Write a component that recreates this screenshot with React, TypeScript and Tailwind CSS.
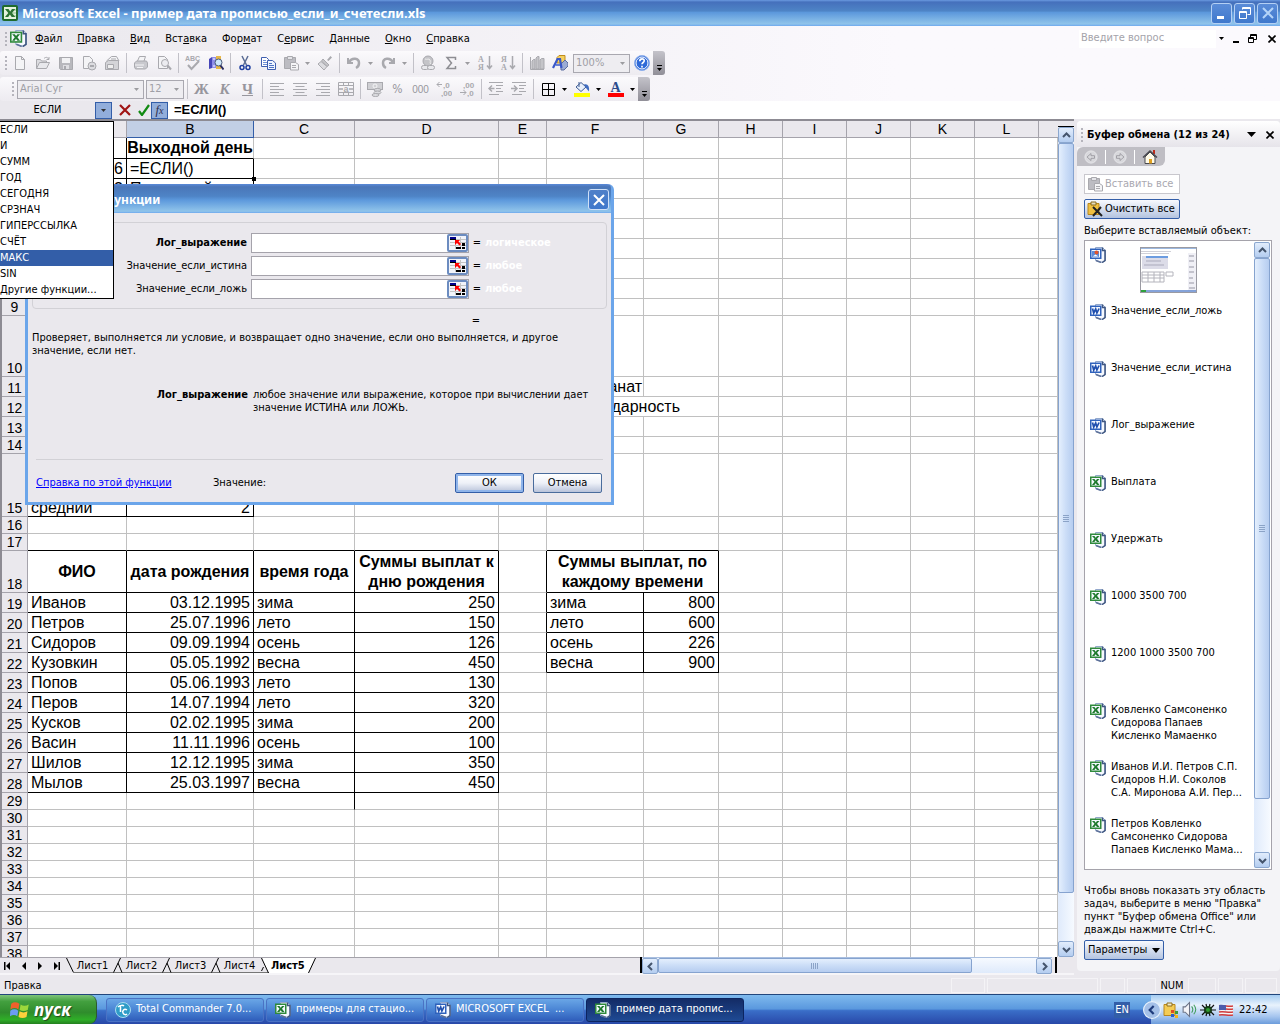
import type { ReactNode } from 'react';

type Align = 'l' | 'r' | 'c';

interface Cell {
  text?: string;
  align?: Align;
  bold?: boolean;
  span?: number;
  right?: boolean;
  bottom?: boolean;
  extra?: string;
}

interface RowDef {
  n: number;
  h: string;
  cells?: Record<string, Cell>;
}

const COLUMNS = ['A', 'B', 'C', 'D', 'E', 'F', 'G', 'H', 'I', 'J', 'K', 'L', 'M'];

const FUNCTIONS = ['ЕСЛИ', 'И', 'СУММ', 'ГОД', 'СЕГОДНЯ', 'СРЗНАЧ', 'ГИПЕРССЫЛКА', 'СЧЁТ', 'МАКС', 'SIN', 'Другие функции...'];

const MENU = [
  ['', 'Ф', 'айл'],
  ['', 'П', 'равка'],
  ['', 'В', 'ид'],
  ['Вст', 'а', 'вка'],
  ['Фор', 'м', 'ат'],
  ['С', 'е', 'рвис'],
  ['', 'Д', 'анные'],
  ['', 'О', 'кно'],
  ['', 'С', 'правка'],
];

const PEOPLE = [
  ['Иванов', '03.12.1995', 'зима', '250'],
  ['Петров', '25.07.1996', 'лето', '150'],
  ['Сидоров', '09.09.1994', 'осень', '126'],
  ['Кузовкин', '05.05.1992', 'весна', '450'],
  ['Попов', '05.06.1993', 'лето', '130'],
  ['Перов', '14.07.1994', 'лето', '320'],
  ['Кусков', '02.02.1995', 'зима', '200'],
  ['Васин', '11.11.1996', 'осень', '100'],
  ['Шилов', '12.12.1995', 'зима', '350'],
  ['Мылов', '25.03.1997', 'весна', '450'],
];

const SEASONS = [
  ['зима', '800'],
  ['лето', '600'],
  ['осень', '226'],
  ['весна', '900'],
];

const box = { right: true, bottom: true };

// the cell being edited carries the fill handle in its corner
const active = 'px-[3px] relative after:absolute after:-bottom-[3px] after:-right-[3px] after:size-1 after:bg-black';

const ROWS: RowDef[] = [
  { n: 1, h: 'h-[21px]', cells: { A: { right: true, bottom: true }, B: { text: 'Выходной день', bold: true, align: 'c', bottom: true } } },
  { n: 2, h: 'h-5', cells: { A: { text: '6', align: 'r', ...box }, B: { text: '=ЕСЛИ()', extra: active, ...box } } },
  { n: 3, h: 'h-5', cells: { A: { text: '3', align: 'r', ...box }, B: { text: 'Последний', ...box } } },
  ...[4, 5, 6, 7, 8].map(n => ({ n, h: 'h-5' })),
  { n: 9, h: 'h-[17px]' },
  { n: 10, h: 'h-[61px]' },
  { n: 11, h: 'h-5', cells: { F: { text: 'гранат', align: 'r', extra: 'pr-px' } } },
  { n: 12, h: 'h-5', cells: { F: { text: 'солидарность', align: 'r', span: 2, extra: 'pr-[38px]' } } },
  { n: 13, h: 'h-5' },
  { n: 14, h: 'h-[17px]' },
  { n: 15, h: 'h-[63px]', cells: { A: { text: 'средний', ...box }, B: { text: '2', align: 'r', ...box } } },
  { n: 16, h: 'h-[17px]' },
  {
    n: 17,
    h: 'h-[17px]',
    cells: { A: { bottom: true }, B: { bottom: true }, C: { bottom: true }, D: { bottom: true }, F: { bottom: true }, G: { bottom: true } },
  },
  {
    n: 18,
    h: 'h-[42px]',
    cells: {
      A: { text: 'ФИО', align: 'c', bold: true, ...box },
      B: { text: 'дата рождения', align: 'c', bold: true, ...box },
      C: { text: 'время года', align: 'c', bold: true, ...box },
      D: { text: 'Суммы выплат к\nдню рождения', align: 'c', bold: true, ...box },
      E: { right: true },
      F: { text: 'Суммы выплат, по\nкаждому времени', align: 'c', bold: true, span: 2, ...box },
    },
  },
  ...PEOPLE.map((p, i) => {
    const cells: Record<string, Cell> = {
      A: { text: p[0], ...box },
      B: { text: p[1], align: 'r', ...box },
      C: { text: p[2], ...box },
      D: { text: p[3], align: 'r', ...box },
    };
    if (SEASONS[i]) {
      cells.E = { right: true };
      cells.F = { text: SEASONS[i][0], ...box };
      cells.G = { text: SEASONS[i][1], align: 'r', ...box };
    }
    return { n: 19 + i, h: 'h-5', cells };
  }),
  { n: 29, h: 'h-[17px]', cells: { C: { right: true } } },
  ...[30, 31, 32, 33, 34, 35, 36, 37, 38].map(n => ({ n, h: 'h-[17px]' })),
];

const CLIPS: { kind: 'ppt' | 'word' | 'excel'; lines: string[] }[] = [
  { kind: 'ppt', lines: [] },
  { kind: 'word', lines: ['Значение_если_ложь'] },
  { kind: 'word', lines: ['Значение_если_истина'] },
  { kind: 'word', lines: ['Лог_выражение'] },
  { kind: 'excel', lines: ['Выплата'] },
  { kind: 'excel', lines: ['Удержать'] },
  { kind: 'excel', lines: ['1000 3500 700'] },
  { kind: 'excel', lines: ['1200 1000 3500 700'] },
  { kind: 'excel', lines: ['Ковленко Самсоненко', 'Сидорова Папаев', 'Кисленко Мамаенко'] },
  { kind: 'excel', lines: ['Иванов И.И. Петров С.П.', 'Сидоров Н.И. Соколов', 'С.А. Миронова А.И. Пер...'] },
  { kind: 'excel', lines: ['Петров Ковленко', 'Самсоненко Сидорова', 'Папаев Кисленко Мама...'] },
];

/* ---------- icons ---------- */

function Svg({ children, size = 16 }: { children: ReactNode; size?: number }) {
  return (
    <svg viewBox="0 0 16 16" width={size} height={size} fill="none" className="shrink-0" aria-hidden="true">
      {children}
    </svg>
  );
}

function ExcelIcon() {
  return (
    <svg viewBox="0 0 16 16" width="16" height="16" fill="none" className="shrink-0" aria-hidden="true">
      <rect x="1" y="1" width="14" height="14" rx="1" fill="#e4f2de" stroke="#1f6b2c" strokeWidth="2" />
      <path d="M10 5h4M10 8h4M10 11h4" stroke="#8fc48c" />
      <path d="M3 4h3.500l1.700 2.500L10 4h3.300L10 8l3.300 4H9.700L7.900 9.600 6.200 12H3l3.300-4z" fill="#2c7434" />
    </svg>
  );
}

function DocIcon({ kind, size = 16 }: { kind: 'ppt' | 'word' | 'excel'; size?: number }) {
  const edge = kind === 'excel' ? '#2f8a3c' : '#2f62bc';
  return (
    <Svg size={size}>
      <path d="M5.500.500h7l3 3v10l-3 2-7-2z" fill="#f6f9ff" stroke="#93a8cc" />
      <path d="M12.500.500v3h2.500v10l-3 2" stroke="#3f5680" strokeWidth="1.500" />
      <path d="M6 13.500l5 2" stroke="#5c7098" strokeWidth="1.500" />
      <rect x=".75" y="2.250" width="10" height="9" fill="#f4f8ff" stroke={edge} strokeWidth="1.500" />
      {kind === 'excel' && <path d="M2 4h2.500l1.200 1.700L7 4h2.500L7 6.800 9.500 10H7L5.600 8.300 4.400 10H2l2.500-3.200z" fill="#1f7a2e" />}
      {kind === 'word' && <path d="M2.500 4.500l1.200 4.500 2-4 1.200 4 2.200-4.500" stroke="#1f4fae" strokeWidth="1.700" />}
      {kind === 'ppt' && (
        <>
          <rect x="2" y="4" width="7" height="6" fill="#5a8ad8" />
          <circle cx="6.500" cy="5.500" r="2" fill="#e0542c" />
          <path d="M2.500 9.500l3-2 3 2z" fill="#fff" />
        </>
      )}
    </Svg>
  );
}

function Caret({ color = '#9c9ca0' }: { color?: string }) {
  return (
    <svg viewBox="0 0 5 3" width="5" height="3" className="shrink-0" aria-hidden="true">
      <path d="M0 0h5L2.500 3z" fill={color} />
    </svg>
  );
}

const G = '#a9a9ae';
const L = '#dcdce0';

const icons = {
  fresh: <Svg><path d="M3.500 1.500h6l3 3v10h-9z" fill="#f4f4f6" stroke={G} /><path d="M9.500 1.500v3h3" stroke={G} /></Svg>,
  open: <Svg><path d="M1.500 13.500v-9h4l1 1.500h5v2" fill={L} stroke={G} /><path d="M1.500 13.500l3-6h10l-3 6z" fill="#e8e8ec" stroke={G} /><path d="M9 3.500c2-2 4-1 4.500.500M14 2v2.500h-2.500" stroke={G} /></Svg>,
  save: <Svg><path d="M1.500 2.500h13v12h-12l-1-1z" fill="#b8b8bd" stroke={G} /><path d="M4 3h8v5H4z" fill="#f2f2f4" /><path d="M5 10h6v4H5z" fill="#dedee2" /><path d="M6 11h2v3H6z" fill={G} /></Svg>,
  perm: <Svg><path d="M2.500 1.500h6l3 3v9h-9z" fill="#f4f4f6" stroke={G} /><circle cx="11" cy="11" r="4" fill={L} stroke={G} /><path d="M9 11h4" stroke={G} strokeWidth="2" /></Svg>,
  mail: <Svg><path d="M2.500 6l5-4.500h5L15 6" fill="#f4f4f6" stroke={G} /><path d="M7 4h5" stroke={G} /><path d="M1.500 7.500l3-2h10v9h-13z" fill="#d4d4d8" stroke={G} /><path d="M3.500 13.500v-4h6v4z" fill="#eee" stroke={G} /></Svg>,
  print: <Svg><path d="M4.500 6l2-4.500h6L11 6" fill="#f4f4f6" stroke={G} /><path d="M1.500 8l2-2h10l1 2v4l-2 2h-10l-1-2z" fill="#c9c9ce" stroke={G} /><path d="M2 10h9M4 12.500h6" stroke="#f4f4f6" /></Svg>,
  preview: <Svg><path d="M2.500 1.500h6l3 3v9h-9z" fill="#f4f4f6" stroke={G} /><circle cx="9" cy="8" r="3.500" fill="#ececf0" stroke={G} /><path d="M11.500 10.500l3.500 4" stroke={G} strokeWidth="2" /></Svg>,
  spell: <Svg><text x="0" y="6" fontSize="7" fontFamily="Liberation Sans" fontWeight="700" fill={G}>ABC</text><path d="M3 10l3.500 4L14 6" stroke={G} strokeWidth="2" /></Svg>,
  research: <Svg><path d="M1 4l3-2v11l-3 1z" fill="#4646b8" /><path d="M4 2h4v11H4z" fill="#8f8fe8" /><path d="M5 4h2M5 11h2" stroke="#fff" /><path d="M8 1h5v13H8z" fill="#e8b848" /><circle cx="10.500" cy="7.500" r="3.500" fill="#cfe8fc" stroke="#4a5c78" /><path d="M12.500 10.500l3 4" stroke="#2c2c60" strokeWidth="2" /></Svg>,
  cut: <Svg><path d="M5 1l4.500 9M11 1L6.500 10" stroke="#5a6c94" strokeWidth="1.500" /><circle cx="5" cy="12.500" r="2" stroke="#1f3fa0" strokeWidth="1.500" /><circle cx="11" cy="12.500" r="2" stroke="#1f3fa0" strokeWidth="1.500" /></Svg>,
  copy: <Svg><path d="M1.500 2.500h5l2 2v7h-7z" fill="#fff" stroke="#3f5fb0" /><path d="M3 5.500h3M3 7.500h4M3 9.500h4" stroke="#6f8fd4" /><path d="M7.500 5.500h5l3 2.500v6.500h-8z" fill="#eef4ff" stroke="#3f5fb0" /><path d="M9 8.500h3M9 10.500h5M9 12.500h5" stroke="#4f74c4" /></Svg>,
  paste: <Svg><path d="M1.500 2.500h11v11h-11z" fill="#bcbcc2" stroke={G} /><path d="M4.500 1.500h5v3h-5z" fill="#e4e4e8" stroke={G} /><path d="M7.500 7.500h5l3 2v5.500h-8z" fill="#f4f4f6" stroke={G} /><path d="M9 10.500h4M9 12.500h4" stroke={G} /></Svg>,
  painter: <Svg><path d="M10 5l3.500-4 1.500 1.500L11.500 6z" fill={G} /><path d="M6 4l6 6-2 1.500L4.500 6z" fill="#c4c4c8" stroke={G} /><path d="M4 6.500L1 9l6 6 3-3.500z" fill={L} stroke={G} /></Svg>,
  undo: <Svg><path d="M2 3v5h5" stroke={G} strokeWidth="2" /><path d="M3 7c3-5 10-4 10 1 0 2-1 4-3 5" stroke={G} strokeWidth="2.500" /></Svg>,
  redo: <Svg><path d="M14 3v5H9" stroke={G} strokeWidth="2" /><path d="M13 7C10 2 3 3 3 8c0 2 1 4 3 5" stroke={G} strokeWidth="2.500" /></Svg>,
  link: <Svg><circle cx="8" cy="6" r="5" fill="#c4c4c8" stroke={G} /><path d="M5 4c2 1 4-1 5 1s-1 3 1 4" stroke="#eee" /><rect x="1.500" y="10.500" width="7" height="4" rx="2" fill="#e8e8ec" stroke={G} /><rect x="7.500" y="10.500" width="7" height="4" rx="2" fill="#e8e8ec" stroke={G} /></Svg>,
  sum: <Svg><path d="M12.500 5V2.500H4L8.500 8 4 13.500h8.500V11" stroke="#8e8e93" strokeWidth="1.500" /></Svg>,
  sortA: <Svg><text x="1" y="7" fontSize="8" fontFamily="Liberation Serif" fontWeight="700" fill={G}>А</text><text x="1" y="15" fontSize="8" fontFamily="Liberation Serif" fontWeight="700" fill={G}>Я</text><path d="M12.500 1v12M10 10.500l2.500 3 2.500-3" stroke={G} strokeWidth="1.500" /></Svg>,
  sortZ: <Svg><text x="1" y="7" fontSize="8" fontFamily="Liberation Serif" fontWeight="700" fill={G}>Я</text><text x="1" y="15" fontSize="8" fontFamily="Liberation Serif" fontWeight="700" fill={G}>А</text><path d="M12.500 1v12M10 10.500l2.500 3 2.500-3" stroke={G} strokeWidth="1.500" /></Svg>,
  chart: <Svg><path d="M1.500 2v12.500H15" stroke={G} /><path d="M3 6l1.500-1.500H6V14H3zM7 3l1.500-1.500H10V14H7zM11 5l1.500-1.500H15V14h-4z" fill="#c4c4c8" stroke={G} /></Svg>,
  drawing: <Svg><path d="M5 2.500l2-2h6v6L11 8H5z" fill="#f4d060" stroke="#c08c1c" /><path d="M9 9l4-4 3 3v3l-4 4H9z" fill="#9cacd4" stroke="#5a6ca0" /><path d="M1 13L5.500 4H8l1.500 9" stroke="#3a58c8" strokeWidth="2.200" /><path d="M3.500 10h5" stroke="#3a58c8" strokeWidth="1.500" /></Svg>,
  help: <Svg><circle cx="8" cy="8" r="7.500" fill="#2f6ad8" stroke="#8fb0ec" /><circle cx="8" cy="8" r="6" stroke="#fff" /><path d="M5.800 6.300c0-3.300 4.700-3 4.400-.300-.200 1.500-2.200 1.500-2.200 3.200M8 10.800v1.600" stroke="#fff" strokeWidth="1.700" /></Svg>,
  left: <Svg><path d="M1 2.500h14M1 5.500h9M1 8.500h14M1 11.500h9M1 14.500h14" stroke={G} /></Svg>,
  center: <Svg><path d="M1 2.500h14M3.500 5.500h9M1 8.500h14M3.500 11.500h9M1 14.500h14" stroke={G} /></Svg>,
  right: <Svg><path d="M1 2.500h14M6 5.500h9M1 8.500h14M6 11.500h9M1 14.500h14" stroke={G} /></Svg>,
  merge: <Svg><path d="M.5 1.500h15v13H.5zM.5 4.500h15M.5 11.500h15M5.500 1.500v3M10.500 1.500v3M5.500 11.500v3M10.500 11.500v3" stroke={G} /><path d="M1 8h4M11 8h4" stroke={G} strokeWidth="1.500" /><text x="5.500" y="10.500" fontSize="9" fontWeight="700" fontFamily="Liberation Sans" fill={G}>a</text></Svg>,
  money: <Svg><rect x=".5" y="1.500" width="15" height="7" fill="#d0d0d4" stroke={G} /><circle cx="8" cy="5" r="2" stroke="#f4f4f6" /><ellipse cx="10.500" cy="9" rx="3.500" ry="1.500" fill={L} stroke={G} /><ellipse cx="10.500" cy="11.500" rx="3.500" ry="1.500" fill={L} stroke={G} /><ellipse cx="8.500" cy="14" rx="3.500" ry="1.500" fill={L} stroke={G} /></Svg>,
  inc: <Svg><path d="M6 3.500H1M3.500 1L1 3.500 3.500 6" stroke={G} /><text x="7" y="7" fontSize="8" fontFamily="Liberation Sans" fontWeight="700" fill={G}>,0</text><text x="5" y="15" fontSize="8" fontFamily="Liberation Sans" fontWeight="700" fill={G}>,00</text></Svg>,
  dec: <Svg><path d="M1 11.500h6M4.500 9L7 11.500 4.500 14" stroke={G} /><text x="4" y="7" fontSize="8" fontFamily="Liberation Sans" fontWeight="700" fill={G}>,00</text><text x="8" y="15" fontSize="8" fontFamily="Liberation Sans" fontWeight="700" fill={G}>,0</text></Svg>,
  outdent: <Svg><path d="M1 1.500h14M8 4.500h7M8 7.500h5M8 10.500h7M1 13.500h10" stroke={G} /><path d="M6.500 7.500H1M4 4.500l-3 3 3 3" stroke={G} strokeWidth="1.500" /></Svg>,
  indent: <Svg><path d="M1 1.500h14M8 4.500h7M8 7.500h5M8 10.500h7M1 13.500h10" stroke={G} /><path d="M0 7.500h5.500M3 4.500l3 3-3 3" stroke={G} strokeWidth="1.500" /></Svg>,
  borders: <Svg><path d="M2.500 2.500h12v12h-12zM8.500 2.500v12M2.500 8.500h12" stroke="#000" /></Svg>,
  fill: <Svg><path d="M2 6l5-4.500L12 6 7 10.500z" fill="#e8f0fc" stroke="#3f5c94" /><path d="M5 1v5" stroke="#3f5c94" /><path d="M10 3.500c4-1 5.500 2 5 7L12 7z" fill="#3f6cc0" /><path d="M0 12h16v4H0z" fill="#ff0" /></Svg>,
  font: <Svg><text x="2.500" y="11" fontSize="14" fontFamily="Liberation Serif" fontWeight="700" fill="#2c4c8c">A</text><path d="M0 12h16v4H0z" fill="#f00" /></Svg>,
};

/* ---------- toolbars ---------- */

function Tool({ label, children, small }: { label: string; children: ReactNode; small?: boolean }) {
  return (
    <button type="button" aria-label={label} className={`flex h-[22px] shrink-0 items-center justify-center ${small ? 'w-[11px]' : 'w-[23px]'}`}>
      {children}
    </button>
  );
}

function Sep() {
  return (
    <span className="flex h-5 w-[6px] shrink-0 justify-center">
      <span className="w-px bg-[#c2c1c8]" />
    </span>
  );
}

function Grip() {
  return (
    <span className="flex w-[3px] shrink-0 flex-col gap-[2px]">
      {[0, 1, 2, 3].map(i => (
        <span key={i} className="size-[2px] bg-[#b5b4bc]" />
      ))}
    </span>
  );
}

function BarEnd() {
  return (
    <button type="button" aria-label="Параметры панели инструментов" className="flex h-6 w-3 shrink-0 flex-col items-center justify-end gap-[2px] rounded-r-[3px] bg-gradient-to-b from-[#c4c3ca] to-[#918f98] pb-1">
      <span className="h-px w-[5px] bg-black" />
      <Caret color="#000" />
    </button>
  );
}

function BoxSelect({ label, value, width }: { label: string; value: string; width: string }) {
  return (
    <label className={`flex h-[19px] shrink-0 items-center border border-[#a9a8b0] bg-[#eeedf1] pr-1 ${width}`}>
      <select aria-label={label} disabled className="h-[17px] min-w-0 flex-1 appearance-none bg-transparent pl-[2px] text-[11px] leading-4 text-[#9f9fa6] opacity-100">
        <option>{value}</option>
      </select>
      <Caret />
    </label>
  );
}

function TitleBar() {
  const btn = 'flex size-[21px] items-center justify-center rounded-[3px] border border-[#b4d0f4] bg-gradient-to-b from-[#5a8cd8] to-[#3f78cc]';
  return (
    <header className="flex h-[26px] shrink-0 items-center bg-[linear-gradient(#6a9ae0_0,#4570bc_8%,#4e84c6_42%,#5c98dc_48%,#90c4ea_92%,#6ea8ee_100%)] pl-[2px] pr-[2px]">
      <ExcelIcon />
      <h1 className="min-w-0 flex-1 truncate pl-1 font-['Noto_Sans'] text-[13px] font-bold leading-5 text-white">
        Microsoft Excel - пример дата прописью_если_и_счетесли.xls
      </h1>
      <div className="flex gap-[2px]">
        <button type="button" aria-label="Свернуть" className={btn}>
          <Svg><path d="M3 11h7v3H3z" fill="#fff" /></Svg>
        </button>
        <button type="button" aria-label="Восстановить" className={btn}>
          <Svg><path d="M5.500 4.500v-2h8v7h-3M5.500 3.500h8M2.500 6.500h7v7h-7zM2.500 7.500h7" stroke="#fff" /></Svg>
        </button>
        <button type="button" aria-label="Закрыть" className={btn}>
          <Svg><path d="M3 3l10 10M13 3L3 13" stroke="#b4d4f8" strokeWidth="2" /></Svg>
        </button>
      </div>
    </header>
  );
}

function MenuBar() {
  return (
    <nav className="flex h-[25px] shrink-0 items-center pl-[5px]">
      <Grip />
      <span className="ml-[2px] mr-1">
        <DocIcon kind="excel" size={17} />
      </span>
      {MENU.map(([a, b, c]) => (
        <button key={a + b + c} type="button" className="mr-[7px] px-1 leading-4">
          {a}
          <u>{b}</u>
          {c}
        </button>
      ))}
      <div className="ml-auto flex h-[18px] items-center bg-white">
        <input aria-label="Введите вопрос" placeholder="Введите вопрос" className="w-[137px] bg-transparent pl-[2px] text-[11px] outline-none placeholder:text-[#a4a3aa]" />
        <button type="button" aria-label="Список вопросов" className="flex h-[18px] w-[11px] items-center justify-center bg-[#fbf9fd]">
          <Caret color="#000" />
        </button>
      </div>
      <div className="flex pl-1">
        <Tool label="Свернуть окно" small><svg width="7" height="9" aria-hidden="true"><path d="M0 7h6v2H0z" /></svg></Tool>
        <button type="button" aria-label="Восстановить окно" className="flex h-[22px] w-[21px] items-center justify-center">
          <svg viewBox="0 0 9 9" width="9" height="9" fill="none" stroke="#000" aria-hidden="true"><path d="M2.500 3V.5h6v5H6M2.500 1.500h6M.5 3.500h5v5h-5zM.5 4.500h5" /></svg>
        </button>
        <button type="button" aria-label="Закрыть окно" className="flex h-[22px] w-[17px] items-center justify-center">
          <svg viewBox="0 0 8 8" width="8" height="8" stroke="#000" strokeWidth="1.600" aria-hidden="true"><path d="M.5.5l7 7M7.500.5l-7 7" /></svg>
        </button>
      </div>
    </nav>
  );
}

function Toolbars() {
  const serif = "font-['Liberation_Serif'] text-[15px] font-bold text-[#97969d]";
  return (
    <div className="flex shrink-0 flex-col gap-[2px]">
      <div className="flex h-6 items-center self-start rounded-[3px] bg-gradient-to-b from-[#fbfafc] to-[#edebf0] pl-[5px]">
        <Grip />
        <Tool label="Создать">{icons.fresh}</Tool>
        <Tool label="Открыть">{icons.open}</Tool>
        <Tool label="Сохранить">{icons.save}</Tool>
        <Tool label="Разрешения">{icons.perm}</Tool>
        <Tool label="Сообщение">{icons.mail}</Tool>
        <Sep />
        <Tool label="Печать">{icons.print}</Tool>
        <Tool label="Предварительный просмотр">{icons.preview}</Tool>
        <Sep />
        <Tool label="Орфография">{icons.spell}</Tool>
        <Tool label="Справочные материалы">{icons.research}</Tool>
        <Sep />
        <Tool label="Вырезать">{icons.cut}</Tool>
        <Tool label="Копировать">{icons.copy}</Tool>
        <Tool label="Вставить">{icons.paste}</Tool>
        <Tool label="Варианты вставки" small><Caret /></Tool>
        <Tool label="Формат по образцу">{icons.painter}</Tool>
        <Sep />
        <Tool label="Отменить">{icons.undo}</Tool>
        <Tool label="Список отмены" small><Caret /></Tool>
        <Tool label="Вернуть">{icons.redo}</Tool>
        <Tool label="Список возврата" small><Caret /></Tool>
        <Sep />
        <Tool label="Гиперссылка">{icons.link}</Tool>
        <Tool label="Автосумма">{icons.sum}</Tool>
        <Tool label="Список функций" small><Caret /></Tool>
        <Tool label="По возрастанию">{icons.sortA}</Tool>
        <Tool label="По убыванию">{icons.sortZ}</Tool>
        <Sep />
        <Tool label="Диаграмма">{icons.chart}</Tool>
        <Tool label="Рисование">{icons.drawing}</Tool>
        <span className="pl-[2px]">
          <BoxSelect label="Масштаб" value="100%" width="w-[57px]" />
        </span>
        <Tool label="Справка">{icons.help}</Tool>
        <BarEnd />
      </div>
      <div className="flex h-6 items-center self-start rounded-[3px] bg-gradient-to-b from-[#fbfafc] to-[#edebf0] pl-3">
        <Grip />
        <span className="flex gap-[2px] pl-[2px]">
          <BoxSelect label="Шрифт" value="Arial Cyr" width="w-[127px]" />
          <BoxSelect label="Размер" value="12" width="w-[38px]" />
        </span>
        <Sep />
        <Tool label="Полужирный"><span className={serif}>Ж</span></Tool>
        <Tool label="Курсив"><span className={`${serif} italic`}>К</span></Tool>
        <Tool label="Подчеркнутый"><span className={`${serif} underline`}>Ч</span></Tool>
        <Sep />
        <Tool label="По левому краю">{icons.left}</Tool>
        <Tool label="По центру">{icons.center}</Tool>
        <Tool label="По правому краю">{icons.right}</Tool>
        <Tool label="Объединить и поместить в центре">{icons.merge}</Tool>
        <Sep />
        <Tool label="Денежный формат">{icons.money}</Tool>
        <Tool label="Процентный формат"><span className="text-[12px] text-[#97969d]">%</span></Tool>
        <Tool label="Формат с разделителями"><span className="font-['Liberation_Sans'] text-[10px] text-[#97969d]">000</span></Tool>
        <Tool label="Увеличить разрядность">{icons.inc}</Tool>
        <Tool label="Уменьшить разрядность">{icons.dec}</Tool>
        <Sep />
        <Tool label="Уменьшить отступ">{icons.outdent}</Tool>
        <Tool label="Увеличить отступ">{icons.indent}</Tool>
        <Sep />
        <Tool label="Границы">{icons.borders}</Tool>
        <Tool label="Варианты границ" small><Caret color="#000" /></Tool>
        <Tool label="Цвет заливки">{icons.fill}</Tool>
        <Tool label="Варианты заливки" small><Caret color="#000" /></Tool>
        <Tool label="Цвет шрифта">{icons.font}</Tool>
        <Tool label="Варианты цвета" small><Caret color="#000" /></Tool>
        <BarEnd />
      </div>
    </div>
  );
}

function FormulaBar() {
  const blue = 'flex h-[17px] w-[17px] items-center justify-center border border-[#335ea8] bg-[#92aedb]';
  return (
    <div className="flex h-[18px] shrink-0 items-center bg-[#eae8ed]">
      <span className="w-[95px] text-center leading-4">ЕСЛИ</span>
      <button type="button" aria-label="Список функций" className={blue}><Caret color="#333" /></button>
      <button type="button" aria-label="Отмена ввода" className="flex w-[25px] justify-center">
        <svg viewBox="0 0 12 12" width="12" height="12" stroke="#a01414" strokeWidth="2.200" aria-hidden="true"><path d="M1 1l10 10M11 1L1 11" /></svg>
      </button>
      <button type="button" aria-label="Ввод" className="flex w-[14px] justify-center">
        <svg viewBox="0 0 12 12" width="12" height="12" fill="none" stroke="#128a12" strokeWidth="2.200" aria-hidden="true"><path d="M1 7l3 4L11 1" /></svg>
      </button>
      <button type="button" aria-label="Вставка функции" className={`${blue} font-['Liberation_Serif'] text-[13px] italic text-[#303050]`}>
        f<span className="text-[10px]">x</span>
      </button>
      <input aria-label="Строка формул" defaultValue="=ЕСЛИ()" className="h-[18px] min-w-0 flex-1 bg-white pl-[6px] font-['Liberation_Sans'] text-[13px] font-bold outline-none" />
    </div>
  );
}

/* ---------- scroll bars ---------- */

function Arrow({ dir }: { dir: 'up' | 'down' | 'left' | 'right' }) {
  const d = { up: 'M1 6l3.500-3.500L8 6', down: 'M1 3l3.500 3.500L8 3', left: 'M6 1L2.500 4.500 6 8', right: 'M3 1l3.500 3.500L3 8' }[dir];
  return (
    <button type="button" aria-label={`Прокрутка ${dir}`} className="flex size-4 shrink-0 items-center justify-center rounded-[2px] border border-[#8ba7cf] bg-gradient-to-b from-[#e2edfc] to-[#b4cdf0]">
      <svg viewBox="0 0 9 9" width="9" height="9" fill="none" stroke="#44546c" strokeWidth="2" aria-hidden="true"><path d={d} /></svg>
    </button>
  );
}

function VScroll({ thumb }: { thumb: string }) {
  return (
    <div className="flex w-4 min-h-0 flex-1 flex-col bg-gradient-to-r from-[#dfeafb] to-[#f6faff]">
      <Arrow dir="up" />
      <div className="min-h-0 flex-1">
        <div className={`flex flex-col items-center justify-center gap-px rounded-[2px] border border-[#86a3cf] bg-gradient-to-r from-[#e4effd] via-[#cbddf7] to-[#b6cdf0] ${thumb}`}>
          {[0, 1, 2, 3].map(i => (
            <span key={i} className="h-px w-[6px] bg-[#8ba3c7]" />
          ))}
        </div>
      </div>
      <Arrow dir="down" />
    </div>
  );
}

/* ---------- sheet ---------- */

function SheetRow({ row }: { row: RowDef }) {
  const out: ReactNode[] = [];
  for (let i = 0; i < COLUMNS.length; i++) {
    const col = COLUMNS[i];
    const c: Cell = row.cells?.[col] ?? {};
    const align = c.align === 'r' ? 'text-right' : c.align === 'c' ? 'text-center' : 'text-left';
    const border = `${c.right ? 'border-r-black' : 'border-r-[#c0c0c0]'} ${c.bottom ? 'border-b-black' : 'border-b-[#c0c0c0]'}`;
    const pad = c.align === 'c' ? 'px-0' : (c.extra ?? 'px-[3px]');
    const valign = row.n === 15 ? 'align-bottom' : 'align-middle';
    out.push(
      <td key={col} colSpan={c.span} className={`whitespace-pre border-r border-b py-0 ${border} ${align} ${pad} ${valign} ${c.bold ? 'font-bold' : ''} ${row.n === 18 ? 'leading-5' : 'leading-4'}`}>
        {c.text}
      </td>,
    );
    if (c.span) i += c.span - 1;
  }
  return (
    <tr className={row.h}>
      <th scope="row" className="border-r border-b border-[#a5a3ab] bg-[#eae8ed] p-0 text-center align-bottom text-[14px] font-normal leading-4">
        {row.n}
      </th>
      {out}
    </tr>
  );
}

function Sheet() {
  return (
    <div className="min-h-0 min-w-0 flex-1 overflow-hidden border-l-2 border-[#8d8b93] bg-white">
      <table className="w-full table-fixed border-separate border-spacing-0 font-['Liberation_Sans'] text-[16px]">
        <colgroup>
          <col className="w-[26px]" />
          <col className="w-[99px]" />
          <col className="w-[127px]" />
          <col className="w-[101px]" />
          <col className="w-[144px]" />
          <col className="w-12" />
          <col className="w-[97px]" />
          <col className="w-[75px]" />
          <col className="w-16" />
          <col className="w-16" />
          <col className="w-16" />
          <col className="w-16" />
          <col className="w-16" />
          <col />
        </colgroup>
        <thead>
          <tr className="h-[17px]">
            <th className="border-r border-b border-[#a5a3ab] bg-[#eae8ed] p-0" />
            {COLUMNS.map(c => (
              <th
                key={c}
                scope="col"
                className={`overflow-hidden border-b p-0 text-[14px] font-normal leading-4 ${c === 'B' ? 'border-r border-[#335ea8] bg-[#c2cfe5]' : c === 'M' ? 'border-[#a5a3ab] bg-[#eae8ed]' : 'border-r border-[#a5a3ab] bg-[#eae8ed]'}`}
              >
                {c === 'M' ? '' : c}
              </th>
            ))}
          </tr>
        </thead>
        <tbody>
          {ROWS.map(r => (
            <SheetRow key={r.n} row={r} />
          ))}
        </tbody>
      </table>
    </div>
  );
}

function NavArrow({ label, d }: { label: string; d: string }) {
  return (
    <button type="button" aria-label={label} className="flex size-4 items-center justify-center">
      <svg viewBox="0 0 8 8" width="8" height="8" aria-hidden="true"><path d={d} /></svg>
    </button>
  );
}

function SheetTabs() {
  return (
    <div className="flex h-[18px] shrink-0 border-b-2 border-[#f6f5f8] bg-[#eae8ed]">
      <div className="flex min-w-0 flex-[640] border-t border-[#a5a3ab]">
        <NavArrow label="Первый лист" d="M0 0h1.500v8H0zM6 0v8L2 4z" />
        <NavArrow label="Предыдущий лист" d="M6 0v8L2 4z" />
        <NavArrow label="Следующий лист" d="M2 0v8l4-4z" />
        <NavArrow label="Последний лист" d="M2 0v8l4-4zM6.500 0H8v8H6.500z" />
        <svg width="10" height="15" fill="none" stroke="#000" aria-hidden="true"><path d="M2.500 0l7 14.500" /></svg>
        {[1, 2, 3, 4].map(n => (
          <button key={n} type="button" className="flex h-[15px] w-[49px] border-b border-[#777] leading-[15px]">
            <span className="w-[37px] text-center">Лист{n}</span>
            <svg width="12" height="15" fill="none" stroke="#000" aria-hidden="true">
              {n === 4 ? (
                <>
                  <path d="M4 0h8v15H11z" fill="#fff" stroke="none" />
                  <path d="M3.500 0l7 15M3.500 13l2-4" />
                </>
              ) : (
                <path d="M2.500 14.500L9.500 0M7 5l4 9.500" />
              )}
            </svg>
          </button>
        ))}
        <button type="button" className="flex h-[15px] bg-white pl-px font-bold leading-[15px]">Лист5</button>
        <svg width="12" height="15" aria-hidden="true">
          <path d="M0 0h10L3 15H0z" fill="#fff" />
          <path d="M10.500 0l-7 15" stroke="#000" />
        </svg>
      </div>
      <span className="w-[2px] bg-black" />
      <div className="flex min-w-0 flex-[410] border-t border-[#a9bfe0] bg-gradient-to-b from-[#f6faff] to-[#dfeafb]">
        <Arrow dir="left" />
        <div className="min-w-0 flex-1">
          <div className="flex h-[15px] w-[83%] items-center justify-center gap-px rounded-[2px] border border-[#86a3cf] bg-gradient-to-b from-[#e4effd] via-[#cbddf7] to-[#b6cdf0]">
            {[0, 1, 2, 3].map(i => (
              <span key={i} className="h-[6px] w-px bg-[#8ba3c7]" />
            ))}
          </div>
        </div>
        <Arrow dir="right" />
      </div>
      <span className="ml-[3px] w-[2px] bg-black" />
      <span className="w-[17px]" />
    </div>
  );
}

function FunctionList() {
  return (
    <ul role="listbox" aria-label="Функции" className="absolute left-0 top-0 w-[114px] border border-l-0 border-black bg-white">
      {FUNCTIONS.map(f => (
        <li key={f} role="option" aria-selected={f === 'МАКС'} className={`h-4 leading-4 ${f === 'МАКС' ? 'bg-[#335ea8] text-white' : ''}`}>
          {f}
        </li>
      ))}
    </ul>
  );
}

/* ---------- function arguments dialog ---------- */

const ARGS = [
  { name: 'Лог_выражение', type: 'логическое', bold: true },
  { name: 'Значение_если_истина', type: 'любое', bold: false },
  { name: 'Значение_если_ложь', type: 'любое', bold: false },
];

function ArgsDialog() {
  const btn = 'h-5 w-[69px] rounded-[2px] border bg-gradient-to-b from-white via-[#eef1f8] to-[#b9c3da] leading-4';
  return (
    <div role="dialog" aria-label="Аргументы функции" className="absolute left-[25px] top-[63px] flex h-[321px] w-[589px] flex-col rounded-t-[6px] border-[3px] border-t-0 border-[#6ba5ea] bg-[#eae8ed]">
      <div className="flex h-[29px] shrink-0 items-center justify-between rounded-t-[4px] bg-[linear-gradient(#5a8ad8_0,#4a76b8_10%,#4e84c6_42%,#5c98dc_55%,#90c4ea_94%,#6ea8ee_100%)] pl-1 pr-[2px] pt-[2px]">
        <h2 className="font-['Noto_Sans'] text-[12px] font-bold leading-5 text-white">Аргументы функции</h2>
        <button type="button" aria-label="Закрыть" className="flex size-[21px] items-center justify-center rounded-[3px] border border-[#cfe0f8] bg-gradient-to-b from-[#4f80c8] to-[#3f78cc]">
          <Svg><path d="M3 3l10 10M13 3L3 13" stroke="#fff" strokeWidth="2" /></Svg>
        </button>
      </div>
      <div className="flex min-h-0 flex-1 flex-col px-1 pt-[9px]">
        <fieldset className="flex h-[87px] shrink-0 flex-col gap-[3px] rounded-[4px] border border-[#d2d1d6] pl-[2px] pt-[10px]">
          {ARGS.map(a => (
            <div key={a.name} className="flex h-5 items-center">
              <label htmlFor={a.name} className={`w-[212px] text-right leading-4 ${a.bold ? 'font-bold' : ''}`}>{a.name}</label>
              <span className="ml-1 flex h-5 w-[218px] border border-[#a5a3ab] bg-white">
                <input id={a.name} className="min-w-0 flex-1 bg-white px-1 outline-none" />
                <button type="button" aria-label="Свернуть диалог" className="flex w-[21px] items-center justify-center rounded-[2px] border-2 border-[#6c8cc0] bg-[#f2f4fa]">
                  <svg viewBox="0 0 16 14" width="16" height="14" aria-hidden="true">
                    <path d="M0 3.500h16M0 6.500h16M0 9.500h16M5.500 1v12M10.500 1v12" stroke="#c4c4c4" fill="none" />
                    <path d="M0 1h6v2H0z" fill="#00008b" />
                    <path d="M0 3h6v1H0z" />
                    <path d="M5 4h5l-1.500 1.500L11 8 9.500 9.500 7 7 5 9z" fill="#f00" />
                    <path d="M12 7h3v3h-3zM6 11h5v2H6zM12 11h3v2h-3z" />
                  </svg>
                </button>
              </span>
              <span className="w-4 text-center">=</span>
              <span className="font-bold text-white">{a.type}</span>
            </div>
          ))}
        </fieldset>
        <span className="mt-1 w-[448px] text-right leading-4">=</span>
        <p className="mt-[2px] w-[545px] leading-[13px]">
          Проверяет, выполняется ли условие, и возвращает одно значение, если оно выполняется, и другое значение, если нет.
        </p>
        <dl className="mt-[31px] flex leading-[13px]">
          <dt className="w-[216px] shrink-0 text-right font-bold">Лог_выражение</dt>
          <dd className="w-[345px] pl-[5px]">любое значение или выражение, которое при вычислении дает значение ИСТИНА или ЛОЖЬ.</dd>
        </dl>
        <div className="mx-1 mt-auto flex h-[43px] shrink-0 items-start border-t border-[#d2d1d6] pr-px pt-[13px]">
          <a href="#help" className="mt-[2px] w-[177px] leading-4 text-[#0000ff] underline">Справка по этой функции</a>
          <span className="mt-[2px] leading-4">Значение:</span>
          <span className="ml-auto flex gap-[9px]">
            <button type="button" className={`${btn} border-[#335ea8] shadow-[inset_0_0_0_2px_#8fb4ea]`}>ОК</button>
            <button type="button" className={`${btn} border-[#4a6c9c]`}>Отмена</button>
          </span>
        </div>
      </div>
    </div>
  );
}

/* ---------- clipboard task pane ---------- */

function Thumb() {
  return (
    <svg viewBox="0 0 57 46" width="57" height="46" className="ml-[29px]" role="img" aria-label="Снимок экрана">
      <rect x=".5" y=".5" width="56" height="45" fill="#fff" stroke="#9a9aa2" />
      <path d="M1 1.500h55" stroke="#9cb8e0" />
      <path d="M1 4.500h30M1 6.500h28" stroke="#d0d0d8" />
      <path d="M48 6h8v38h-8z" fill="#f0f0f6" />
      <path d="M49 9h5M49 14h5M49 20h5M49 25h5M49 31h4M49 36h5M49 41h6" stroke="#b4b4c0" strokeWidth="1.500" />
      <path d="M2 9h26v13H2z" fill="#dcdce8" />
      <path d="M6 9h22v2H6z" fill="#6c9ce0" />
      <path d="M6 14h15M4 18h20" stroke="#aab" />
      <path d="M2 25h22v10H2zM2 28h22M2 31h22M8 25v10M14 25v10M20 25v10M26 25h7v4h-7z" fill="none" stroke="#b4b4bc" />
      <path d="M1 44h55" stroke="#5c84cc" strokeWidth="1.500" />
      <path d="M1 44h5" stroke="#2fa03c" strokeWidth="2" />
    </svg>
  );
}

function TaskPane() {
  return (
    <aside className="flex w-[206px] shrink-0 flex-col bg-[#eae8ed] pb-1 pl-[3px] pt-[2px]">
      <div className="flex min-h-0 flex-1 flex-col rounded-[4px] bg-[#f4f4f7]">
        <div className="flex h-[26px] shrink-0 items-center rounded-t-[4px] bg-gradient-to-b from-white to-[#e6e4ea] pl-1 pt-px">
          <Grip />
          <h2 className="flex-1 whitespace-nowrap pl-[3px] font-bold leading-4">Буфер обмена (12 из 24)</h2>
          <button type="button" aria-label="Другие области задач" className="flex w-[18px] justify-center">
            <svg viewBox="0 0 9 5" width="9" height="5" aria-hidden="true"><path d="M0 0h9L4.500 5z" /></svg>
          </button>
          <button type="button" aria-label="Закрыть область" className="flex w-[20px] justify-center">
            <svg viewBox="0 0 8 8" width="8" height="8" stroke="#000" strokeWidth="1.600" aria-hidden="true"><path d="M.5.5l7 7M7.500.5l-7 7" /></svg>
          </button>
        </div>
        <div className="flex h-[19px] w-[88px] shrink-0 items-center rounded-br-[6px] rounded-tl-[6px] bg-[#bfbec4]">
          <button type="button" aria-label="Назад" className="flex w-7 justify-center">
            <Svg size={14}><circle cx="8" cy="8" r="7" fill="#d8d8dc" stroke="#e8e8ec" /><path d="M12 6.500H8V4L3.500 8 8 12V9.500h4z" stroke="#98979e" /></Svg>
          </button>
          <span className="h-[14px] w-px bg-white" />
          <button type="button" aria-label="Вперед" className="flex w-7 justify-center">
            <Svg size={14}><circle cx="8" cy="8" r="7" fill="#d8d8dc" stroke="#e8e8ec" /><path d="M4 6.500h4V4l4.500 4L8 12V9.500H4z" stroke="#98979e" /></Svg>
          </button>
          <span className="h-[14px] w-px bg-white" />
          <button type="button" aria-label="Домой" className="flex w-[29px] justify-center">
            <Svg><path d="M11 1h2v4h-2z" fill="#c02c1c" /><path d="M3 8v6.500h10V8L8 3z" fill="#fffbe8" stroke="#4a4a50" /><path d="M1 8.500L8 2l7 6.500" stroke="#4a4a50" strokeWidth="1.500" /><path d="M7 10h3v4.500H7z" fill="#e0a020" /></Svg>
          </button>
        </div>
        <div className="flex min-h-0 flex-1 flex-col pl-[7px] pr-2 pt-2">
          <button type="button" disabled className="flex h-5 w-[96px] shrink-0 items-center gap-[2px] whitespace-nowrap border border-[#c8c7cd] bg-white pl-[2px] text-[#a9a8b0]">
            {icons.paste}
            Вставить все
          </button>
          <button type="button" className="mt-[5px] flex h-5 w-[96px] shrink-0 items-center gap-[2px] whitespace-nowrap rounded-[2px] border border-[#335ea8] bg-gradient-to-b from-[#f8fafe] to-[#b4c4e0] pl-[2px]">
            <Svg><path d="M1 2.500h11v11H1z" fill="#f0c040" stroke="#b8861c" /><path d="M4 1h5v3H4z" fill="#e4dcc0" stroke="#8c6c1c" /><path d="M6 6l9 9M14 6l-8 9" stroke="#222" strokeWidth="2" /></Svg>
            Очистить все
          </button>
          <p id="clip-label" className="mt-1 whitespace-nowrap leading-4">Выберите вставляемый объект:</p>
          <div className="mt-px flex h-[630px] min-h-0 border border-[#a5a3ab] bg-white">
            <ul aria-labelledby="clip-label" className="min-w-0 flex-1 overflow-hidden">
              {CLIPS.map((c, i) => (
                <li key={i} className="flex h-[57px] gap-[5px] whitespace-nowrap pl-[5px] pt-[6px] leading-[13px]">
                  <DocIcon kind={c.kind} />
                  {c.kind === 'ppt' ? (
                    <Thumb />
                  ) : (
                    <span>
                      {c.lines.map(l => (
                        <span key={l} className="block">{l}</span>
                      ))}
                    </span>
                  )}
                </li>
              ))}
            </ul>
            <div className="flex flex-col p-px">
              <VScroll thumb="h-[91%]" />
            </div>
          </div>
          <p className="-mr-1 mt-[14px] leading-[13px]">
            Чтобы вновь показать эту область задач, выберите в меню "Правка" пункт "Буфер обмена Office" или дважды нажмите Ctrl+C.
          </p>
          <button type="button" className="mt-1 flex h-5 w-[80px] shrink-0 items-center justify-between rounded-[2px] border border-[#335ea8] bg-gradient-to-b from-[#f8fafe] to-[#b4c4e0] px-[3px]">
            Параметры
            <svg viewBox="0 0 8 5" width="8" height="5" aria-hidden="true"><path d="M0 0h8L4 5z" /></svg>
          </button>
        </div>
      </div>
    </aside>
  );
}

/* ---------- status bar and taskbar ---------- */

function StatusBar() {
  const pane = 'h-[15px] border border-[#f4f3f6]';
  return (
    <footer className="flex h-[19px] shrink-0 items-center gap-[2px] bg-[#eae8ed] pl-1 pr-[3px] pt-[2px]">
      <span className="flex-1 leading-4">Правка</span>
      <span className={`${pane} w-[34px]`} />
      <span className={`${pane} w-[111px]`} />
      <span className={`${pane} w-[25px]`} />
      <span className={`${pane} w-[29px]`} />
      <span className="w-7 text-center leading-4">NUM</span>
      <span className={`${pane} w-[28px]`} />
      <span className={`${pane} w-[25px]`} />
      <span className={`${pane} w-[32px]`} />
    </footer>
  );
}

function TaskButton({ icon, children, active }: { icon: ReactNode; children: ReactNode; active?: boolean }) {
  return (
    <button
      type="button"
      className={`flex h-6 w-[158px] items-center gap-[5px] whitespace-pre rounded-[3px] border pl-2 text-left text-white ${active ? 'border-[#0c2460] bg-gradient-to-b from-[#142c66] to-[#1f4a94]' : 'border-[#4a72c4] bg-gradient-to-b from-[#6aa6e6] via-[#4a84d4] to-[#2f5cba]'}`}
    >
      {icon}
      {children}
    </button>
  );
}

function Taskbar() {
  return (
    <div className="flex h-[30px] shrink-0 items-center border-t border-[#22467c] bg-[linear-gradient(#7fbaee_0,#5a98de_48%,#3a6ec8_54%,#2848a8_100%)]">
      <button type="button" className="flex h-[29px] w-[97px] items-center gap-1 rounded-r-[8px] border-r border-[#2c5c2c] bg-[linear-gradient(#7fc47c_0,#43a03f_22%,#2f8c2c_60%,#2fae28_85%,#24801f_100%)] pl-[10px] font-['Open_Sans'] text-[17px] font-bold italic text-white [text-shadow:1px_1px_1px_#1f4a1c]">
        <Svg size={20}>
          <path d="M1 3c2-1.500 4-1.500 6.500 0L6.700 7.500C4.500 6 2.500 6.300.3 7.500z" fill="#f0602c" />
          <path d="M8.500 3.500c2 1.500 4.500 1.200 6.500 0L14.200 8c-2 1-4.300 1.300-6.500 0z" fill="#9cd83c" />
          <path d="M.2 8.500c2-1.200 4.300-1.500 6.400 0L5.800 13C4 11.500 2 11.800 0 13z" fill="#6c9cf4" />
          <path d="M7.600 9c2 1.200 4.300 1.200 6.400 0l-.8 4.500c-2 1.200-4.400 1.200-6.400 0z" fill="#fcd03c" />
        </Svg>
        пуск
      </button>
      <div className="flex min-w-0 flex-1 gap-[2px] overflow-hidden pl-[9px]">
        <TaskButton icon={<Svg><circle cx="8" cy="8" r="7.500" fill="#2f9cc8" stroke="#a8dcf0" /><path d="M3 5c2-2 5-2 6-1M5.500 4v6" stroke="#fff" strokeWidth="1.500" /><path d="M12 8c-3-2-5 1-4 3s3 2 4 1" stroke="#fff" strokeWidth="1.500" /></Svg>}>
          Total Commander 7.0...
        </TaskButton>
        <TaskButton icon={<DocIcon kind="excel" />}>примеры для стацио...</TaskButton>
        <TaskButton icon={<DocIcon kind="word" />}>MICROSOFT EXCEL  ...</TaskButton>
        <TaskButton icon={<DocIcon kind="excel" />} active>пример дата пропис...</TaskButton>
      </div>
      <span className="mr-[21px] bg-[#335ea8] px-px leading-4 text-white">EN</span>
      <div className="flex h-[29px] w-[129px] shrink-0 items-center gap-[2px] bg-[linear-gradient(#a4ccf2_0,#e8f2fc_35%,#d0e2f8_50%,#a4c4ee_75%,#6c9cdc_100%)]">
        <button type="button" aria-label="Показать скрытые значки" className="-ml-2">
          <Svg size={18}><circle cx="8" cy="8" r="7.500" fill="#a4c0e8" stroke="#e8f2fc" /><path d="M9.500 4.500L6 8l3.500 3.500" stroke="#1f3c7c" strokeWidth="2" /></Svg>
        </button>
        <Svg><path d="M1 2.500h11v11H1z" fill="#f4cc54" stroke="#b8861c" /><path d="M4 1h5v3H4z" fill="#f4ecc8" stroke="#8c6c1c" /><path d="M8 8h3v3H8z" fill="#e04c24" /><path d="M12 9h3v3h-3z" fill="#3f9c3c" /><path d="M8 12h3v3H8z" fill="#2c5cd0" /><path d="M12 13h3v3h-3z" fill="#f4b41c" /></Svg>
        <Svg size={17}><path d="M2 5.500h2L8 1.500v13l-4-4H2z" fill="#f4f4f8" stroke="#6c7488" /><path d="M10 5c1.500 2 1.500 4 0 6M12 3.500c2.500 3 2.500 6 0 9" stroke="#3f9c5c" /></Svg>
        <Svg><path d="M2 3l4 4M14 3l-4 4M0 8h16M2 13l4-4M14 13l-4-4M6 2l1 4M10 2L9 6M6 14l1-4M10 14l-1-4" stroke="#111" strokeWidth="1.200" /><circle cx="8" cy="8" r="4" fill="#163c16" /><circle cx="8" cy="8" r="2" fill="#2f9c2f" /></Svg>
        <Svg><path d="M1 3c5-1 9 1 14 0v10c-5 1-9-1-14 0z" fill="#f4f4f4" /><path d="M1 4c5-1 9 1 14 0M1 7c5-1 9 1 14 0M1 10c5-1 9 1 14 0M1 13c5-1 9 1 14 0" stroke="#d03c3c" strokeWidth="1.500" /><path d="M1 3c3-.5 5 0 7 .3v5C6 8 4 8 1 8.300z" fill="#4c5cac" /></Svg>
        <time className="ml-[3px] leading-4">22:42</time>
      </div>
    </div>
  );
}

export default function App() {
  return (
    <div className="flex h-screen w-full flex-col overflow-hidden bg-[#eae8ed] font-['DejaVu_Sans_Condensed','DejaVu_Sans',sans-serif] text-[11px] text-black">
      <TitleBar />
      <div className="flex shrink-0 flex-col bg-gradient-to-r from-[#eae8ed] to-[#fbf9fd] to-70%">
        <MenuBar />
        <Toolbars />
      </div>
      <FormulaBar />
      <div className="flex min-h-0 flex-1">
        <main className="relative flex min-w-0 flex-1 flex-col border-t-2 border-[#8d8b93]">
          <div className="flex min-h-0 flex-1">
            <Sheet />
            <div className="flex flex-col">
              <span className="h-[6px] w-4 border-b border-black bg-[#eae8ed]" />
              <VScroll thumb="h-[94%]" />
            </div>
          </div>
          <SheetTabs />
          <ArgsDialog />
          <FunctionList />
        </main>
        <TaskPane />
      </div>
      <StatusBar />
      <Taskbar />
    </div>
  );
}
